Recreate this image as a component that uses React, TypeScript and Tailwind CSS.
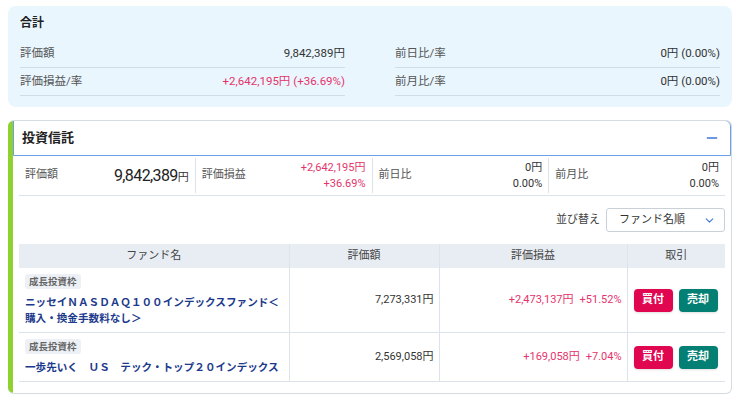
import { ChevronDown, Minus } from 'lucide-react'
import { type FC } from 'react'

const font = "font-['Roboto','Noto_Sans_CJK_JP',sans-serif]"

interface Fund {
  name: string
  value: string
  gain: string
  rate: string
}

const funds: Fund[] = [
  {
    name: 'ニッセイＮＡＳＤＡＱ１００インデックスファンド＜購入・換金手数料なし＞',
    value: '7,273,331円',
    gain: '+2,473,137円',
    rate: '+51.52%',
  },
  {
    name: '一歩先いく　ＵＳ　テック・トップ２０インデックス',
    value: '2,569,058円',
    gain: '+169,058円',
    rate: '+7.04%',
  },
]

const TotalRow: FC<{ label: string; value: string; red?: boolean }> = ({
  label,
  value,
  red,
}) => (
  <div className="flex h-[28px] items-center justify-between border-b border-[#cfdde8] text-[11.5px]">
    <span className="text-[#555]">{label}</span>
    <span className={red ? 'text-[#e5346c]' : 'text-[#333]'}>{value}</span>
  </div>
)

const SummaryCell: FC<{
  label: string
  children: React.ReactNode
  last?: boolean
}> = ({ label, children, last }) => (
  <div
    className={`flex flex-1 items-center justify-between px-[6px] ${
      last ? '' : 'border-r border-[#dde3ea]'
    }`}
  >
    <span className="text-[11px] text-[#555]">{label}</span>
    <div className="text-right">{children}</div>
  </div>
)

export default function App() {
  return (
    <div className={`${font} w-[740px] bg-white px-[8px] pt-[6px] text-[#333]`}>
      <div className="rounded-[8px] bg-[#e9f6fd] px-[12px] pt-[10px] pb-[11px]">
        <div className="text-[12px] leading-[14px] font-bold text-[#222]">合計</div>
        <div className="mt-[10px] grid grid-cols-2 gap-x-[50px]">
          <div>
            <TotalRow label="評価額" value="9,842,389円" />
            <TotalRow label="評価損益/率" value="+2,642,195円 (+36.69%)" red />
          </div>
          <div>
            <TotalRow label="前日比/率" value="0円 (0.00%)" />
            <TotalRow label="前月比/率" value="0円 (0.00%)" />
          </div>
        </div>
      </div>

      <div className="mt-[13px] flex overflow-hidden rounded-[6px] border border-l-0 border-[#d6dbe1]">
        <div className="w-[5px] shrink-0 bg-[#8fd12e]" />
        <div className="flex-1">
          <div className="-mt-px flex h-[36px] items-center justify-between rounded-tr-[6px] border border-[#6d9fe6] pr-[10px] pl-[8px]">
            <span className="text-[13px] font-bold text-[#222]">投資信託</span>
            <Minus className="h-[16px] w-[16px] text-[#3b78d8]" strokeWidth={2} />
          </div>

          <div className="px-[6px] pb-[11px]">
            <div className="flex h-[40px] items-stretch border-b border-[#dde3ea] py-[2px]">
              <SummaryCell label="評価額">
                <span className="text-[16px] tracking-[-0.6px] text-[#222]">9,842,389</span>
                <span className="text-[11px]">円</span>
              </SummaryCell>
              <SummaryCell label="評価損益">
                <div className="text-[11px] leading-[16px] text-[#e5346c]">+2,642,195円</div>
                <div className="text-[11px] leading-[16px] text-[#e5346c]">+36.69%</div>
              </SummaryCell>
              <SummaryCell label="前日比">
                <div className="text-[11px] leading-[16px]">0円</div>
                <div className="text-[11px] leading-[16px]">0.00%</div>
              </SummaryCell>
              <SummaryCell label="前月比" last>
                <div className="text-[11px] leading-[16px]">0円</div>
                <div className="text-[11px] leading-[16px]">0.00%</div>
              </SummaryCell>
            </div>

            <div className="mt-[12px] flex items-center justify-end gap-[6px]">
              <span className="text-[11px] text-[#444]">並び替え</span>
              <div className="flex h-[24px] w-[119px] items-center justify-between rounded-[3px] border border-[#c9d0d8] pr-[8px] pl-[12px]">
                <span className="text-[11px] text-[#333]">ファンド名順</span>
                <ChevronDown className="h-[13px] w-[13px] text-[#3b78d8]" strokeWidth={2} />
              </div>
            </div>

            <table className="mt-[12px] w-full border-collapse text-[11px]">
              <thead>
                <tr className="h-[24px] bg-[#e8edf3] text-[#444]">
                  <th className="w-[270px] border-r border-[#dde3ea] font-normal">ファンド名</th>
                  <th className="w-[150px] border-r border-[#dde3ea] font-normal">評価額</th>
                  <th className="w-[188px] border-r border-[#dde3ea] font-normal">評価損益</th>
                  <th className="font-normal">取引</th>
                </tr>
              </thead>
              <tbody>
                {funds.map((f, i) => (
                  <tr key={i} className="border-b border-[#dde3ea]">
                    <td className="border-r border-[#dde3ea] px-[6px] pt-[6px] pb-[5px] align-top">
                      <div className="w-fit rounded-[3px] bg-[#edf1f5] px-[4px] text-[9.5px] leading-[15px] font-bold text-[#666]">
                        成長投資枠
                      </div>
                      <div className="mt-[6px] text-[10.6px] leading-[16px] font-bold text-[#1c3a8c]">
                        {f.name}
                      </div>
                    </td>
                    <td className="border-r border-[#dde3ea] px-[5px] text-right">{f.value}</td>
                    <td className="border-r border-[#dde3ea] px-[5px] text-right text-[#e5346c]">
                      {f.gain}
                      <span className="ml-[6px]">{f.rate}</span>
                    </td>
                    <td className="px-[6px]">
                      <div className="flex gap-[6px]">
                        <button className="h-[23px] w-[39px] rounded-[4px] bg-[#e0064f] text-[11px] font-bold text-white shadow-sm">
                          買付
                        </button>
                        <button className="h-[23px] w-[39px] rounded-[4px] bg-[#037f74] text-[11px] font-bold text-white shadow-sm">
                          売却
                        </button>
                      </div>
                    </td>
                  </tr>
                ))}
              </tbody>
            </table>
          </div>
        </div>
      </div>
    </div>
  )
}
